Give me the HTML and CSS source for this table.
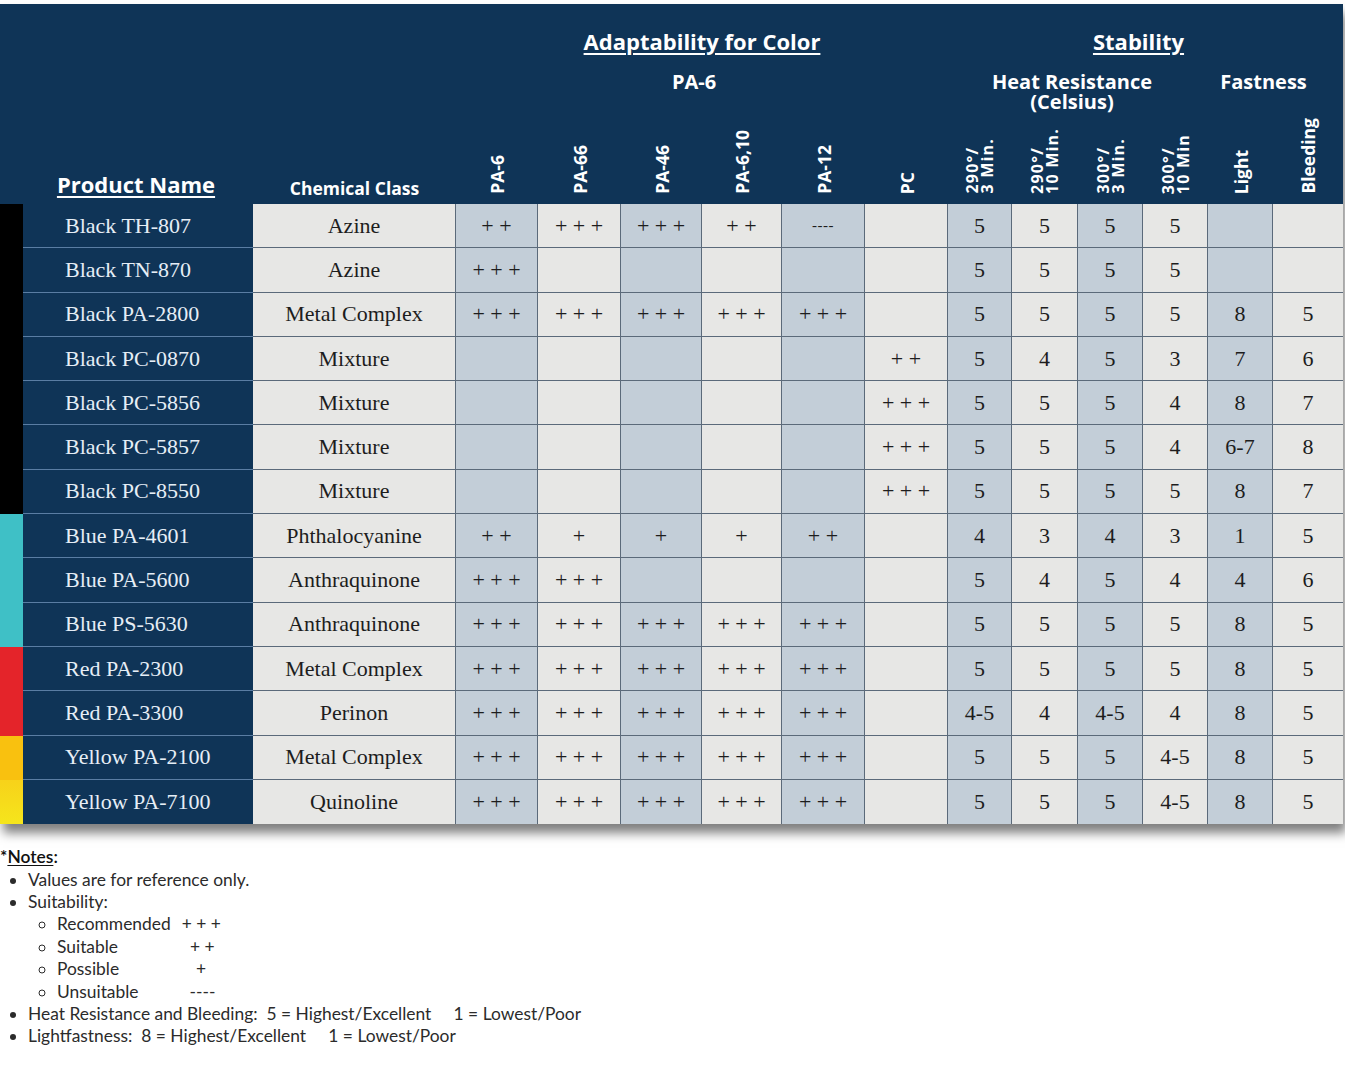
FILE: index.html
```html
<!DOCTYPE html>
<html lang="en">
<head>
<meta charset="utf-8">
<title>Product Adaptability and Stability</title>
<link rel="stylesheet" href="styles.css">
</head>
<body>
<div class="sheet">
  <div class="head">
    <div class="h-product"><span class="ul">Product Name</span></div>
    <div class="h-chem">Chemical Class</div>
    <div class="g-adapt"><span class="ul">Adaptability for Color</span></div>
    <div class="g-pa6">PA-6</div>
    <div class="g-stab"><span class="ul">Stability</span></div>
    <div class="g-heat"><div>Heat Resistance</div><div class="cel">(Celsius)</div></div>
    <div class="g-fast">Fastness</div>
    <div class="rot c4"><span>PA-6</span></div>
    <div class="rot c5"><span>PA-66</span></div>
    <div class="rot c6"><span>PA-46</span></div>
    <div class="rot c7"><span>PA-6,10</span></div>
    <div class="rot c8"><span>PA-12</span></div>
    <div class="rot c9"><span>PC</span></div>
    <div class="rot c10 two"><span>290°/<br>3 Min.</span></div>
    <div class="rot c11 two"><span>290°/<br>10 Min.</span></div>
    <div class="rot c12 two"><span>300°/<br>3 Min.</span></div>
    <div class="rot c13 two"><span>300°/<br>10 Min</span></div>
    <div class="rot c14"><span>Light</span></div>
    <div class="rot c15"><span>Bleeding</span></div>
  </div>
  <div class="body" id="body"></div>
</div>

<div class="notes">
  <div class="notes-title">*<span class="ul">Notes</span>:</div>
  <ul class="list">
    <li>Values are for reference only.</li>
    <li>Suitability:
      <ul class="sub">
        <li><span class="lab">Recommended</span><span class="sym s3">+ + +</span></li>
        <li><span class="lab">Suitable</span><span class="sym s2">+ +</span></li>
        <li><span class="lab">Possible</span><span class="sym s1">+</span></li>
        <li><span class="lab">Unsuitable</span><span class="sym s0">----</span></li>
      </ul>
    </li>
    <li>Heat Resistance and Bleeding:&nbsp; 5 = Highest/Excellent&nbsp;&nbsp;&nbsp;&nbsp; 1 = Lowest/Poor</li>
    <li>Lightfastness:&nbsp; 8 = Highest/Excellent&nbsp;&nbsp;&nbsp;&nbsp; 1 = Lowest/Poor</li>
  </ul>
</div>
<script src="app.js"></script>
</body>
</html>
```
FILE: app.js
```js
const rows = [
  ["black", "Black TH-807", "Azine", ["+ +", "+ + +", "+ + +", "+ +", "----", "", "5", "5", "5", "5", "", ""]],
  ["black", "Black TN-870", "Azine", ["+ + +", "", "", "", "", "", "5", "5", "5", "5", "", ""]],
  ["black", "Black PA-2800", "Metal Complex", ["+ + +", "+ + +", "+ + +", "+ + +", "+ + +", "", "5", "5", "5", "5", "8", "5"]],
  ["black", "Black PC-0870", "Mixture", ["", "", "", "", "", "+ +", "5", "4", "5", "3", "7", "6"]],
  ["black", "Black PC-5856", "Mixture", ["", "", "", "", "", "+ + +", "5", "5", "5", "4", "8", "7"]],
  ["black", "Black PC-5857", "Mixture", ["", "", "", "", "", "+ + +", "5", "5", "5", "4", "6-7", "8"]],
  ["black", "Black PC-8550", "Mixture", ["", "", "", "", "", "+ + +", "5", "5", "5", "5", "8", "7"]],
  ["blue", "Blue PA-4601", "Phthalocyanine", ["+ +", "+", "+", "+", "+ +", "", "4", "3", "4", "3", "1", "5"]],
  ["blue", "Blue PA-5600", "Anthraquinone", ["+ + +", "+ + +", "", "", "", "", "5", "4", "5", "4", "4", "6"]],
  ["blue", "Blue PS-5630", "Anthraquinone", ["+ + +", "+ + +", "+ + +", "+ + +", "+ + +", "", "5", "5", "5", "5", "8", "5"]],
  ["red", "Red PA-2300", "Metal Complex", ["+ + +", "+ + +", "+ + +", "+ + +", "+ + +", "", "5", "5", "5", "5", "8", "5"]],
  ["red", "Red PA-3300", "Perinon", ["+ + +", "+ + +", "+ + +", "+ + +", "+ + +", "", "4-5", "4", "4-5", "4", "8", "5"]],
  ["amber", "Yellow PA-2100", "Metal Complex", ["+ + +", "+ + +", "+ + +", "+ + +", "+ + +", "", "5", "5", "5", "4-5", "8", "5"]],
  ["yellow", "Yellow PA-7100", "Quinoline", ["+ + +", "+ + +", "+ + +", "+ + +", "+ + +", "", "5", "5", "5", "4-5", "8", "5"]]
];
const shaded = [0, 2, 4, 6, 8, 10];
const body = document.getElementById("body");
rows.forEach((r, i) => {
  const last = i === rows.length - 1 ? " last" : "";
  const s = document.createElement("div");
  s.className = "cell stripe " + r[0];
  body.appendChild(s);
  const n = document.createElement("div");
  n.className = "cell name" + last;
  n.textContent = r[1];
  body.appendChild(n);
  const c = document.createElement("div");
  c.className = "cell chem" + last;
  c.textContent = r[2];
  body.appendChild(c);
  r[3].forEach((v, j) => {
    const d = document.createElement("div");
    d.className = "cell data" + (shaded.includes(j) ? " shade" : "") + (j === 11 ? " end" : "") + last;
    if (v === "----") d.classList.add("dash");
    d.textContent = v;
    body.appendChild(d);
  });
});
```
FILE: styles.css
```css
* { box-sizing: border-box; }
html, body { margin: 0; padding: 0; background: #ffffff; }
body { width: 1345px; }

.sheet {
  margin-top: 4px;
  width: 1343px;
  box-shadow: 3px 9px 10px rgba(0, 0, 0, 0.5);
}

.head, .body {
  display: grid;
  grid-template-columns: 23px 230px 203px 82px 83px 81px 80px 83px 83px 64px 66px 65px 65px 65px 70px;
}

.head {
  height: 200px;
  background: #0f3457;
  color: #ffffff;
  font-family: "Open Sans", "Liberation Sans", sans-serif;
  font-weight: 700;
  grid-template-rows: 58px 56px 86px;
}

.ul { text-decoration: underline; text-decoration-thickness: 2px; text-underline-offset: 3px; }

.h-product {
  grid-column: 2; grid-row: 1 / 4;
  align-self: end; justify-self: center;
  font-size: 22px; line-height: 28px;
  padding-bottom: 6px;
  padding-right: 4px;
}
.h-chem {
  grid-column: 3; grid-row: 1 / 4;
  align-self: end; justify-self: center;
  font-size: 17.5px; line-height: 24px;
  padding-bottom: 4px;
}
.g-adapt {
  grid-column: 4 / 10; grid-row: 1;
  text-align: center;
  font-size: 22px; line-height: 30px;
  padding-top: 22px;
}
.g-pa6 {
  grid-column: 4 / 10; grid-row: 2;
  text-align: center;
  font-size: 20px; line-height: 24px;
  padding-top: 8px;
  padding-right: 16px;
}
.g-stab {
  grid-column: 10 / 16; grid-row: 1;
  text-align: center;
  font-size: 22px; line-height: 30px;
  padding-top: 22px;
  padding-right: 14px;
}
.g-heat {
  grid-column: 10 / 14; grid-row: 2;
  text-align: center;
  font-size: 20px; line-height: 20px;
  padding-top: 10px;
  padding-right: 12px;
}
.g-heat .cel { line-height: 19px; }
.g-fast {
  grid-column: 14 / 16; grid-row: 2;
  text-align: center;
  font-size: 20px; line-height: 20px;
  padding-top: 10px;
  padding-right: 24px;
}

.rot {
  grid-row: 3;
  display: flex;
  justify-content: center;
  align-items: flex-end;
  padding-bottom: 10px;
  font-size: 17.5px;
}
.rot span {
  writing-mode: vertical-rl;
  transform: rotate(180deg);
  line-height: 20px;
  white-space: nowrap;
}
.rot.two { font-size: 16px; }
.rot.two span { line-height: 15px; letter-spacing: 1.2px; }
.c4 { grid-column: 4; } .c5 { grid-column: 5; } .c6 { grid-column: 6; }
.c7 { grid-column: 7; } .c8 { grid-column: 8; } .c9 { grid-column: 9; }
.c10 { grid-column: 10; } .c11 { grid-column: 11; } .c12 { grid-column: 12; }
.c13 { grid-column: 13; } .c14 { grid-column: 14; } .c15 { grid-column: 15; }

.body {
  grid-auto-rows: 44.3px;
  font-family: "Liberation Serif", "Times New Roman", serif;
  font-size: 22px;
}
.cell {
  display: flex;
  align-items: center;
}
.stripe.black { background: #000000; }
.stripe.blue { background: #3fc0c6; }
.stripe.red { background: #e4242a; }
.stripe.amber { background: #f9c10f; }
.stripe.yellow { background: linear-gradient(#f7d21a, #f5e51c); }

.name {
  background: #0f3457;
  color: #e6eef6;
  padding-left: 42px;
  border-bottom: 1px solid #5a7da3;
}
.chem, .data {
  justify-content: center;
  color: #1d1d1d;
  background: #e7e7e5;
  border-right: 1px solid #5b6a7a;
  border-bottom: 1px solid #5b6a7a;
}
.data.shade { background: #c3ced8; }
.data.end { border-right: none; }
.last { border-bottom: none; }
.dash { font-size: 15px; letter-spacing: 0.5px; }

.notes {
  margin-top: 22px;
  font-family: "Lato", "Noto Sans", sans-serif;
  font-size: 17.4px;
  line-height: 22.4px;
  color: #2b2b2b;
}
.notes-title { font-weight: 600; color: #111; }
.notes-title .ul { text-decoration-thickness: 1px; text-underline-offset: 2px; }
.list {
  margin: 0;
  padding-left: 28px;
  list-style: disc;
}
.sub {
  margin: 0;
  padding-left: 29px;
  list-style: circle;
}
.lab { display: inline-block; }
.sym { display: inline-block; }
.s3 { margin-left: 11px; }
.s2 { margin-left: 72px; }
.s1 { margin-left: 77px; }
.s0 { margin-left: 51px; }
```
